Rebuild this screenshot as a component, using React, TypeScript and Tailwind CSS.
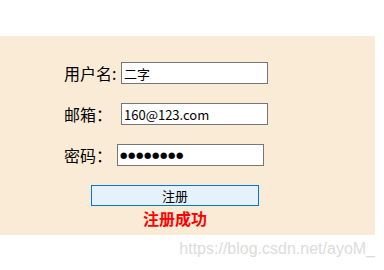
import React from 'react';

const cjk = { fontFamily: '"Noto Sans CJK SC", "Liberation Sans", sans-serif' };

export default function App() {
  return (
    <div className="w-[384px] h-[270px] bg-white overflow-hidden" style={cjk}>
      <div className="h-[36px]" />
      <div className="w-[375px] h-[199px] bg-[#faebd7] pt-[26px] pl-[64px] text-[16px] text-black">
        {/* username */}
        <div className="flex items-center h-[22px]">
          <span className="w-[57px] leading-none">用户名:</span>
          <input
            readOnly
            value="二字"
            className="w-[147px] h-[22px] border border-[#767676] bg-white px-[2px] text-[13px] outline-none"
            style={cjk}
          />
        </div>
        {/* email */}
        <div className="flex items-center h-[22px] mt-[19px]">
          <span className="w-[57px] leading-none">邮箱：</span>
          <input
            readOnly
            value="160@123.com"
            className="w-[147px] h-[22px] border border-[#767676] bg-white px-[2px] text-[13px] outline-none"
            style={cjk}
          />
        </div>
        {/* password - masked value drawn as bullets */}
        <div className="flex items-center h-[22px] mt-[19px]">
          <span className="w-[53px] leading-none">密码：</span>
          <input
            readOnly
            value="●●●●●●●●"
            className="w-[147px] h-[22px] border border-[#767676] bg-white pl-[2px] text-[8.5px] tracking-[0.6px] outline-none"
            style={{ fontFamily: '"DejaVu Sans", sans-serif' }}
          />
        </div>
        {/* submit */}
        <div className="mt-[19px] ml-[27px] w-[168px] flex flex-col items-center">
          <button className="w-[168px] h-[21px] border border-[#0078d7] bg-[#e5f1fb] text-[13px] leading-none flex items-center justify-center">
            注册
          </button>
          <span className="mt-[3px] text-[16px] font-bold text-[#ff0000] leading-[18px]">注册成功</span>
        </div>
      </div>
      <div className="w-[375px] flex justify-end mt-[4px]">
        <span
          className="text-[16px] text-[#dcdcdc] leading-[20px]"
          style={{ fontFamily: '"Liberation Sans", Arial, sans-serif' }}
        >
          https://blog.csdn.net/ayoM_
        </span>
      </div>
    </div>
  );
}
